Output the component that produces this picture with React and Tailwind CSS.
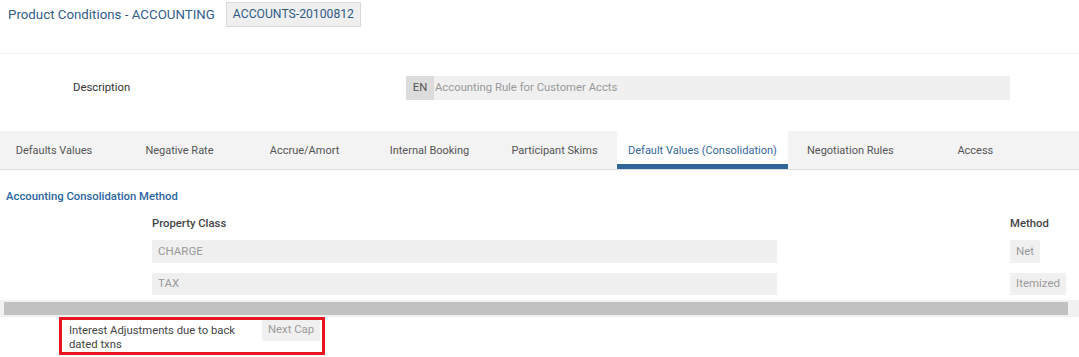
import React from "react";

const tabs = [
  "Defaults Values",
  "Negative Rate",
  "Accrue/Amort",
  "Internal Booking",
  "Participant Skims",
  "Default Values (Consolidation)",
  "Negotiation Rules",
  "Access",
];
const activeTab = 5;

const rows = [
  { property: "CHARGE", method: "Net" },
  { property: "TAX", method: "Itemized" },
];

function Tab({ label, active, first }) {
  if (active) {
    return (
      <div className="h-full px-[11px] flex items-center justify-center bg-white border-b-[5px] border-[#2f6599] text-[#35689a] whitespace-nowrap pt-[7px]">
        {label}
      </div>
    );
  }
  return (
    <div
      className={
        "h-full flex items-center justify-center text-[#555] whitespace-nowrap pt-[3px] " +
        (first ? "w-[117px] pr-[9px]" : "w-[125px]")
      }
    >
      {label}
    </div>
  );
}

export default function App() {
  return (
    <div
      className="w-[1079px] h-[357px] overflow-hidden bg-white text-[11.3px]"
      style={{ fontFamily: "Roboto, 'Liberation Sans', sans-serif" }}
    >
      {/* header */}
      <div className="h-[54px] border-b border-[#eeeeee] flex items-start pt-[2px] pl-[8px] gap-[11px]">
        <h1 className="text-[13.3px] text-[#335d89] leading-[25px]">
          Product Conditions - ACCOUNTING
        </h1>
        <span className="h-[25px] px-[6px] flex items-center bg-[#efefef] border border-[#d9d9d9] text-[12.2px] text-[#2f5b87]">
          ACCOUNTS-20100812
        </span>
      </div>

      {/* description */}
      <div className="h-[77px] flex items-start pt-[22px]">
        <div className="w-[406px] pl-[73px] h-[24px] flex items-center text-[#333] pt-[1px]">
          Description
        </div>
        <div className="w-[604px] h-[24px] flex bg-[#f0f0f0]">
          <span className="w-[28px] bg-[#dcdcdc] flex items-center justify-center text-[#555]">
            EN
          </span>
          <span className="pl-[1px] pt-[1px] flex items-center text-[#999]">
            Accounting Rule for Customer Accts
          </span>
        </div>
      </div>

      {/* tabs */}
      <div className="h-[39px] bg-[#f3f3f3] border-b border-[#dddddd] flex text-[11px]">
        {tabs.map((t, i) => (
          <Tab key={t} label={t} active={i === activeTab} first={i === 0} />
        ))}
      </div>

      {/* consolidation */}
      <div className="pt-[19px]">
        <div className="pl-[6px] font-medium text-[#2c64a0] leading-[16px]">
          Accounting Consolidation Method
        </div>
        <div className="flex mt-[11px] leading-[16px] font-medium text-[#444]">
          <div className="w-[1010px] pl-[152px]">Property Class</div>
          <div>Method</div>
        </div>
        <div className="flex flex-col gap-[10px] mt-[8px]">
          {rows.map((r) => (
            <div key={r.property} className="flex h-[22.5px]">
              <div className="w-[1010px] pl-[152px]">
                <div className="w-[625px] h-full bg-[#f0f0f0] pl-[6px] flex items-center text-[#9a9a9a] text-[11.5px]">
                  {r.property}
                </div>
              </div>
              <div className="h-full bg-[#f0f0f0] px-[6px] flex items-center text-[#9a9a9a] text-[11.5px]">
                {r.method}
              </div>
            </div>
          ))}
        </div>

        {/* horizontal scrollbar */}
        <div className="mt-[5px] h-[17px] bg-[#f1f1f1] pl-[4px] pr-[11px] py-[2px]">
          <div className="h-full bg-[#c1c1c1]" />
        </div>
      </div>

      {/* highlighted row */}
      <div className="ml-[59px] w-[266px] h-[38px] border-[3px] border-[#e8141f] flex items-start pl-[7px]">
        <div className="w-[193px] text-[#444] leading-[14.3px] pt-[4px]">
          Interest Adjustments due to back dated txns
        </div>
        <div className="h-[21px] px-[6px] flex items-center bg-[#f0f0f0] text-[#9a9a9a]">
          Next Cap
        </div>
      </div>
    </div>
  );
}
